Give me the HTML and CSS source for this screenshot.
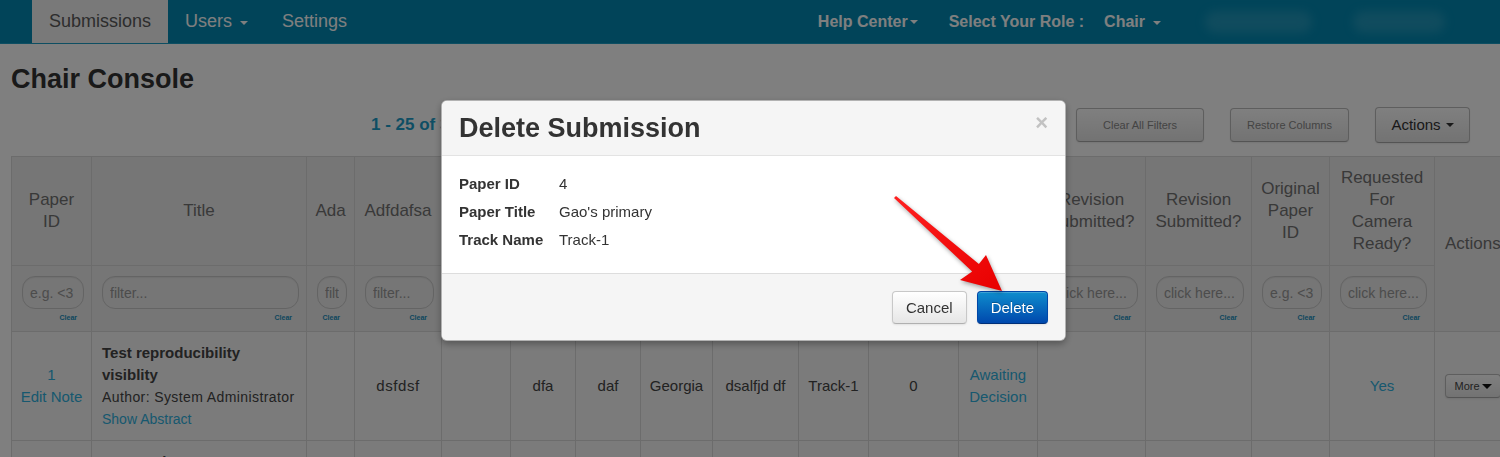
FILE: index.html
```html
<!DOCTYPE html>
<html lang="en">
<head>
<meta charset="utf-8">
<title>Chair Console</title>
<link rel="stylesheet" href="styles.css">
</head>
<body>
<header class="navbar">
  <nav class="nav-main">
    <a class="nav-item active">Submissions</a>
    <a class="nav-item">Users<span class="caret nav-caret"></span></a>
    <a class="nav-item">Settings</a>
  </nav>
  <div class="nav-right">
    <a class="nav-strong help">Help Center<span class="caret tight"></span></a>
    <span class="nav-strong role-label">Select Your Role :</span>
    <a class="nav-strong role">Chair<span class="caret nav-caret"></span></a>
    <span class="redacted user-name"></span>
    <span class="redacted user-menu"></span>
  </div>
</header>

<main class="page">
  <h1 class="page-title">Chair Console</h1>

  <div class="toolbar">
    <div class="pager">1 - 25 of 30</div>
    <div class="tools">
      <button class="btn btn-muted btn-filters">Clear All Filters</button>
      <button class="btn btn-muted btn-restore">Restore Columns</button>
      <button class="btn btn-actions">Actions<span class="caret dark"></span></button>
    </div>
  </div>

  <table class="grid">
    <colgroup>
      <col class="w80"><col class="w215"><col class="w48"><col class="w87">
      <col class="w69"><col class="w65"><col class="w65"><col class="w72">
      <col class="w86"><col class="w70"><col class="w90"><col class="w79">
      <col class="w108"><col class="w106"><col class="w78"><col class="w105">
      <col class="w74">
    </colgroup>
    <thead>
      <tr class="head-row">
        <th>Paper ID</th>
        <th>Title</th>
        <th>Ada</th>
        <th>Adfdafsa</th>
        <th>Topic</th>
        <th>Dfa</th>
        <th>Daf</th>
        <th>State</th>
        <th>Org</th>
        <th>Track</th>
        <th>Reviews</th>
        <th>Status</th>
        <th>Revision Submitted?</th>
        <th>Revision Submitted?</th>
        <th>Original Paper ID</th>
        <th>Requested For Camera Ready?</th>
        <th rowspan="2" class="actions-head">Actions</th>
      </tr>
      <tr class="filter-row">
        <td><input class="filter" placeholder="e.g. &lt;3"><a class="clear">Clear</a></td>
        <td><input class="filter" placeholder="filter..."><a class="clear">Clear</a></td>
        <td><input class="filter" placeholder="filter..."><a class="clear">Clear</a></td>
        <td><input class="filter" placeholder="filter..."><a class="clear">Clear</a></td>
        <td><input class="filter" placeholder="filter..."><a class="clear">Clear</a></td>
        <td><input class="filter" placeholder="filter..."><a class="clear">Clear</a></td>
        <td><input class="filter" placeholder="filter..."><a class="clear">Clear</a></td>
        <td><input class="filter" placeholder="filter..."><a class="clear">Clear</a></td>
        <td><input class="filter" placeholder="filter..."><a class="clear">Clear</a></td>
        <td><input class="filter" placeholder="filter..."><a class="clear">Clear</a></td>
        <td><input class="filter" placeholder="e.g. &lt;3"><a class="clear">Clear</a></td>
        <td><input class="filter" placeholder="click here..."><a class="clear">Clear</a></td>
        <td><input class="filter" placeholder="click here..."><a class="clear">Clear</a></td>
        <td><input class="filter" placeholder="click here..."><a class="clear">Clear</a></td>
        <td><input class="filter" placeholder="e.g. &lt;3"><a class="clear">Clear</a></td>
        <td><input class="filter" placeholder="click here..."><a class="clear">Clear</a></td>
      </tr>
    </thead>
    <tbody>
      <tr>
        <td class="id-cell"><span class="num">1</span><br><a class="link">Edit Note</a></td>
        <td class="title-cell">
          <strong class="paper-title">Test reproducibility visiblity</strong><br>
          <span class="author">Author: System Administrator</span><br>
          <a class="link small">Show Abstract</a>
        </td>
        <td></td>
        <td class="wide">dsfdsf</td>
        <td></td>
        <td>dfa</td>
        <td>daf</td>
        <td>Georgia</td>
        <td>dsalfjd df</td>
        <td>Track-1</td>
        <td>0</td>
        <td><a class="link">Awaiting Decision</a></td>
        <td></td>
        <td></td>
        <td></td>
        <td><a class="link">Yes</a></td>
        <td class="more-cell"><button class="btn btn-more">More<span class="caret black"></span></button></td>
      </tr>
      <tr>
        <td class="id-cell"></td>
        <td class="title-cell"><strong class="paper-title">Gao's primary</strong></td>
        <td></td>
        <td></td>
        <td></td>
        <td></td>
        <td></td>
        <td></td>
        <td></td>
        <td></td>
        <td></td>
        <td></td>
        <td></td>
        <td></td>
        <td></td>
        <td></td>
        <td></td>
      </tr>
    </tbody>
  </table>
</main>

<div class="backdrop"></div>

<div class="modal" role="dialog">
  <div class="modal-header">
    <h3 class="modal-title">Delete Submission</h3>
    <span class="modal-close">&times;</span>
  </div>
  <div class="modal-body">
    <dl class="details">
      <dt>Paper ID</dt><dd>4</dd>
      <dt>Paper Title</dt><dd>Gao's primary</dd>
      <dt>Track Name</dt><dd>Track-1</dd>
    </dl>
  </div>
  <div class="modal-footer">
    <button class="btn btn-cancel">Cancel</button>
    <button class="btn btn-primary">Delete</button>
  </div>
</div>

<!-- callout arrow pointing at the confirm button -->
<svg class="callout" width="125" height="115" viewBox="885 185 125 115">
  <defs>
    <linearGradient id="arrowFill" x1="0" y1="0" x2="1" y2="1">
      <stop offset="0" stop-color="#ff2020"/>
      <stop offset="1" stop-color="#e80000"/>
    </linearGradient>
  </defs>
  <polygon fill="url(#arrowFill)"
    points="896,195.9 978.9,263.9 986,255 1002,291 960,280 972.2,271.6 894,198.1"/>
</svg>
</body>
</html>
```

FILE: styles.css
```css
html, body {
  margin: 0;
  padding: 0;
  overflow: hidden;
}

body {
  width: 1500px;
  height: 457px;
  background: #fff;
  font-family: "Liberation Sans", Arial, Helvetica, sans-serif;
  color: #333;
  position: relative;
}

a { cursor: pointer; }

/* ---------- top navigation ---------- */
.navbar {
  height: 44px;
  background: #0289b3;
  border-bottom: 1px solid #1a9cc4;
  box-sizing: border-box;
  display: flex;
  align-items: stretch;
  padding-left: 32px;
}

.nav-main {
  display: flex;
}

.nav-item {
  display: flex;
  align-items: center;
  padding: 0 17px;
  font-size: 18px;
  color: #fff;
}

.nav-item.active {
  background: #f2f2f2;
  color: #5a5a5a;
}

.nav-right {
  margin-left: auto;
  display: flex;
  align-items: center;
  padding-right: 55px;
}

.nav-strong {
  font-size: 16px;
  font-weight: bold;
  color: #fff;
  display: flex;
  align-items: center;
}

.help { margin-right: 31px; }
.role-label { margin-right: 20px; }
.role { margin-right: 44px; }

.redacted {
  display: block;
  height: 22px;
  border-radius: 11px;
  background: rgba(90, 180, 205, 0.35);
  filter: blur(5px);
}
.user-name { width: 107px; margin-right: 41px; }
.user-menu { width: 92px; }

.caret {
  display: inline-block;
  width: 0;
  height: 0;
  border-top: 4px solid currentColor;
  border-left: 4px solid transparent;
  border-right: 4px solid transparent;
  vertical-align: middle;
}
.nav-caret { margin-left: 8px; margin-top: 2px; }
.tight { margin-left: 2px; margin-top: 1px; }
.caret.dark { margin-left: 5px; color: #333; }
.caret.black { margin-left: 2px; color: #111; border-top-width: 5px; border-left-width: 5px; border-right-width: 5px; }

/* ---------- page content ---------- */
.page {
  padding: 0 11px;
}

.page-title {
  margin: 18px 0 0;
  font-size: 27px;
  line-height: 34px;
  font-weight: bold;
  color: #333;
}

.toolbar {
  height: 60px;
  display: flex;
  align-items: center;
  padding-bottom: 3px;
  box-sizing: border-box;
  padding-right: 19px;
}

.pager {
  margin-left: 360px;
  font-size: 17px;
  font-weight: bold;
  color: #1d9dc9;
}

.tools {
  margin-left: auto;
  display: flex;
  align-items: center;
  gap: 26px;
}

.btn {
  font-family: inherit;
  border: 1px solid #bdbdbd;
  border-bottom-color: #a8a8a8;
  border-radius: 4px;
  background: linear-gradient(#ffffff, #e6e6e6);
  box-shadow: inset 0 1px 0 rgba(255,255,255,.2), 0 1px 2px rgba(0,0,0,.08);
  color: #333;
  padding: 0;
  cursor: pointer;
  display: inline-flex;
  align-items: center;
  justify-content: center;
}

.btn-muted {
  height: 34px;
  font-size: 11px;
  color: #888;
}
.btn-filters { width: 128px; }
.btn-restore { width: 119px; }

.btn-actions {
  height: 36px;
  width: 95px;
  font-size: 15px;
}

/* ---------- submissions grid ---------- */
.grid {
  border-collapse: collapse;
  table-layout: fixed;
  width: 1497px;
  font-size: 15px;
  color: #444;
}

.w48 { width: 48px; }
.w65 { width: 65px; }
.w69 { width: 69px; }
.w70 { width: 70px; }
.w72 { width: 72px; }
.w74 { width: 74px; }
.w78 { width: 78px; }
.w79 { width: 79px; }
.w80 { width: 80px; }
.w86 { width: 86px; }
.w87 { width: 87px; }
.w90 { width: 90px; }
.w105 { width: 105px; }
.w106 { width: 106px; }
.w108 { width: 108px; }
.w215 { width: 215px; }

.grid th,
.grid td {
  border: 1px solid #d9d9d9;
  text-align: center;
  vertical-align: middle;
  overflow: hidden;
}

.head-row th {
  background: #ececec;
  font-size: 17px;
  line-height: 22px;
  font-weight: normal;
  color: #727272;
  padding: 10px 8px;
  height: 88px;
}

.actions-head {
  text-align: left !important;
  padding-left: 10px !important;
}

.filter-row td {
  background: #ececec;
  padding: 10px 7px 7px 10px;
}

.filter {
  display: block;
  box-sizing: border-box;
  width: 100%;
  height: 33px;
  border: 1px solid #c9c9c9;
  border-radius: 13px;
  background: #ececec;
  padding: 0 7px;
  font-family: inherit;
  font-size: 14px;
  color: #999;
  box-shadow: inset 0 1px 1px rgba(0,0,0,.06);
}
.filter::placeholder { color: #999; }

.clear {
  display: block;
  margin-top: 3px;
  padding-right: 7px;
  text-align: right;
  font-size: 7px;
  line-height: 12px;
  font-weight: bold;
  color: #1a8fbd;
}

.grid tbody td {
  background: #f6f6f6;
  padding: 10px 6px;
  line-height: 22px;
  height: 88px;
}

.grid tbody .id-cell { padding: 10px 4px; }

.grid tbody .title-cell {
  text-align: left;
  vertical-align: top;
  padding: 10px;
}

.paper-title {
  font-size: 15px;
  color: #444;
}

.author {
  font-size: 14px;
  letter-spacing: 0.4px;
  color: #444;
}

.wide { letter-spacing: 0.6px; }

.link { color: #2fb1de; }
.link.small { font-size: 14px; }
.num { color: #2fb1de; }

.grid tbody .more-cell { text-align: left; padding: 10px; }

.btn-more {
  height: 24px;
  width: 56px;
  font-size: 11px;
  color: #444;
}

/* ---------- modal ---------- */
.backdrop {
  position: fixed;
  inset: 0;
  background: #000;
  opacity: 0.5;
}

.modal {
  position: fixed;
  top: 100px;
  left: 50%;
  margin-left: -309px;
  width: 625px;
  box-sizing: border-box;
  background: #fff;
  border: 1px solid rgba(0,0,0,.3);
  border-radius: 6px;
  box-shadow: 0 3px 7px rgba(0,0,0,.3);
  overflow: hidden;
}

.modal-header {
  height: 54px;
  background: #f5f5f5;
  border-bottom: 1px solid #e3e3e3;
  padding: 0 17px;
  display: flex;
  align-items: center;
  justify-content: space-between;
}

.modal-title {
  margin: 0;
  font-size: 27px;
  font-weight: bold;
  color: #333;
}

.modal-close {
  align-self: flex-start;
  margin-top: 11px;
  font-size: 22px;
  line-height: 22px;
  font-weight: bold;
  color: #c2c2c2;
}

.modal-body {
  padding: 14px 17px 19px;
}

.details {
  margin: 0;
  display: grid;
  grid-template-columns: 100px 1fr;
  font-size: 15px;
  line-height: 28px;
  color: #333;
}
.details dt { font-weight: bold; }
.details dd { margin: 0; }

.modal-footer {
  background: #f5f5f5;
  border-top: 1px solid #ddd;
  padding: 17px 17px 16px;
  display: flex;
  justify-content: flex-end;
  gap: 10px;
}

.btn-cancel,
.btn-primary {
  height: 33px;
  padding: 0 13px;
  font-size: 15px;
}

.btn-cancel {
  border-color: #c8c8c8;
  border-bottom-color: #b0b0b0;
}

.btn-primary {
  color: #fff;
  background: linear-gradient(#0e8dcd, #0048ad);
  border-color: #0047a8 #0047a8 #002f78;
  text-shadow: 0 -1px 0 rgba(0,0,0,.25);
}

/* ---------- callout arrow ---------- */
.callout {
  position: absolute;
  left: 885px;
  top: 185px;
  overflow: visible;
  filter: drop-shadow(1px 2px 2px rgba(0,0,0,.35));
}
```
